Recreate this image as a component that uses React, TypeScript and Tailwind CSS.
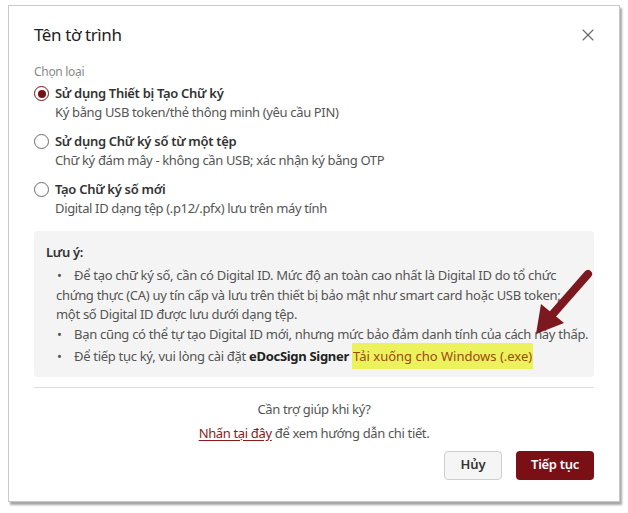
import React, { useState } from 'react';
import { X } from 'lucide-react';

const options = [
  { title: 'Sử dụng Thiết bị Tạo Chữ ký', desc: 'Ký bằng USB token/thẻ thông minh (yêu cầu PIN)' },
  { title: 'Sử dụng Chữ ký số từ một tệp', desc: 'Chữ ký đám mây - không cần USB; xác nhận ký bằng OTP' },
  { title: 'Tạo Chữ ký số mới', desc: 'Digital ID dạng tệp (.p12/.pfx) lưu trên máy tính' },
];

const Radio: React.FC<{ checked: boolean }> = ({ checked }) => (
  <span
    className={`mt-[3px] flex h-[15px] w-[15px] shrink-0 items-center justify-center rounded-full border bg-white ${
      checked ? 'border-[#7a1016]' : 'border-[#6b6b6b]'
    }`}
  >
    {checked && <span className="h-[8px] w-[8px] rounded-full bg-[#7a1016]" />}
  </span>
);

const Dot = () => <span className="inline-block w-[18px] pl-[1px]">•</span>;

export default function App() {
  const [selected, setSelected] = useState(0);

  return (
    <div
      className="relative min-h-[513px] w-[628px] bg-white pl-[8px] pt-[5px]"
      style={{ fontFamily: '"Noto Sans", "Open Sans", sans-serif' }}
    >
      <div className="h-[497px] w-[612px] border border-[#c9c9c9] bg-white px-[25px] shadow-[2px_3px_2px_rgba(0,0,0,0.35)]">
        {/* header */}
        <div className="flex h-[58px] items-center justify-between">
          <h2 className="text-[17px] tracking-[-0.4px] text-[#222]">Tên tờ trình</h2>
          <button className="mr-[-4px] text-[#666]">
            <X size={20} strokeWidth={1.3} />
          </button>
        </div>

        <div className="text-[12px] leading-[16px] tracking-[-0.3px] text-[#8a8a8a]">Chọn loại</div>

        {/* options */}
        <div className="mt-[3px] flex flex-col gap-[9px]">
          {options.map((o, i) => (
            <label key={i} className="flex cursor-pointer gap-[6px]" onClick={() => setSelected(i)}>
              <Radio checked={selected === i} />
              <div className="flex flex-col">
                <span className="text-[13px] font-semibold leading-[20px] tracking-[-0.3px] text-[#333]">{o.title}</span>
                <span className="text-[13px] leading-[19px] tracking-[-0.35px] text-[#555]">{o.desc}</span>
              </div>
            </label>
          ))}
        </div>

        {/* note */}
        <div className="mt-[13px] rounded-[3px] bg-[#f4f4f4] pb-[10px] pl-[12px] pr-[6px] pt-[11px] text-[13px] leading-[19.5px] tracking-[-0.3px] text-[#555]">
          <div className="mb-[4px] font-semibold leading-[20px] text-[#333]">Lưu ý:</div>
          <div className="whitespace-nowrap pl-[10px]">
            <p>
              <Dot />
              Để tạo chữ ký số, cần có Digital ID. Mức độ an toàn cao nhất là Digital ID do tổ chức
              <br />
              chứng thực (CA) uy tín cấp và lưu trên thiết bị bảo mật như smart card hoặc USB token;
              <br />
              một số Digital ID được lưu dưới dạng tệp.
            </p>
            <p>
              <Dot />
              Bạn cũng có thể tự tạo Digital ID mới, nhưng mức bảo đảm danh tính của cách này thấp.
            </p>
            <p className="mt-[3px]">
              <Dot />
              Để tiếp tục ký, vui lòng cài đặt <b className="font-bold text-[#222]">eDocSign Signer</b>{' '}
              <a className="bg-[#ecf25c] px-[1px] py-[4px] tracking-normal text-[#9b4a10]">Tải xuống cho Windows (.exe)</a>
            </p>
          </div>
        </div>

        <div className="mt-[10px] border-t border-[#dddddd]" />

        {/* help */}
        <div className="mt-[11px] flex flex-col items-center text-[13px] leading-[20px] tracking-[-0.35px] text-[#555]">
          <span>Cần trợ giúp khi ký?</span>
          <span className="mt-[4px]">
            <a className="text-[#8b1a1a] underline underline-offset-2">Nhấn tại đây</a> để xem hướng dẫn chi tiết.
          </span>
        </div>

        {/* footer */}
        <div className="mt-[8px] flex justify-end gap-[14px]">
          <button className="h-[29px] w-[58px] rounded-[4px] border border-[#cfcfcf] bg-[#f5f5f5] text-[13px] font-semibold text-[#333]">
            Hủy
          </button>
          <button className="h-[29px] w-[78px] rounded-[4px] bg-[#7a1016] text-[13px] font-semibold tracking-[-0.3px] text-white">
            Tiếp tục
          </button>
        </div>
      </div>

      {/* annotation arrow */}
      <svg className="pointer-events-none absolute left-0 top-0" width="628" height="513" viewBox="0 0 628 513">
        <line x1="588" y1="274" x2="552" y2="315" stroke="#7b1820" strokeWidth="8" strokeLinecap="round" />
        <polygon points="536,334 541,304 564,323" fill="#7b1820" />
      </svg>
    </div>
  );
}
